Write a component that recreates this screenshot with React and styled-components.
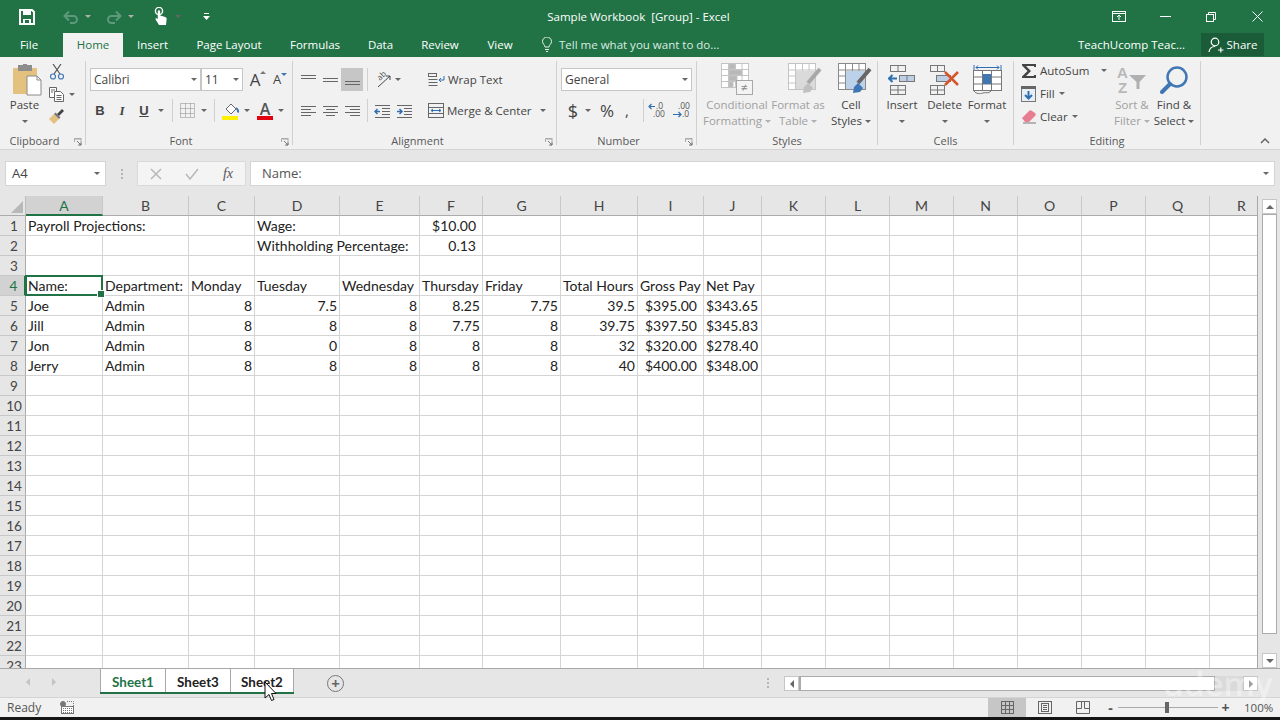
import React from 'react';
import styled, { createGlobalStyle } from 'styled-components';

const GlobalStyle = createGlobalStyle`
  html, body {
    margin: 0;
    padding: 0;
    width: 1280px;
    height: 720px;
    overflow: hidden;
    background: #fff;
  }
  * { box-sizing: border-box; }
`;

const uiFont = `"Open Sans", "Noto Sans", sans-serif`;
const cellFont = `Lato, "Liberation Sans", sans-serif`;
const green = '#217346';

const Page = styled.div`
  position: relative;
  width: 1280px;
  height: 720px;
  display: flex;
  flex-direction: column;
  overflow: hidden;
  font-family: ${uiFont};
  font-size: 11.5px;
  color: #444;
`;

/* title bar */
const TitleBar = styled.div`
  height: 33px;
  background: ${green};
  display: grid;
  grid-template-columns: 1fr auto 1fr;
  align-items: center;
  color: #fff;
`;
const Qat = styled.div`
  display: flex;
  align-items: center;
  padding-left: 19px;
`;
const QatSlot = styled.div`
  width: ${p => p.$w}px;
  margin-left: ${p => p.$ml || 0}px;
  display: flex;
  align-items: center;
  justify-content: center;
`;
const Title = styled.div`
  font-size: 11.5px;
  white-space: pre;
  padding-right: 3px;
`;
const WinControls = styled.div`
  display: flex;
  justify-content: flex-end;
  align-items: center;
`;
const WinBtn = styled.div`
  width: 46px;
  display: flex;
  justify-content: center;
`;

/* tab row */
const TabRow = styled.div`
  height: 24px;
  background: ${green};
  display: flex;
  align-items: stretch;
  color: #fff;
`;
const Tab = styled.div`
  width: ${p => p.$w}px;
  margin-left: ${p => p.$ml || 0}px;
  padding-bottom: 2px;
  display: flex;
  align-items: center;
  justify-content: center;
  white-space: nowrap;
  background: ${p => (p.$active ? '#f1f1f1' : 'transparent')};
  color: ${p => (p.$active ? green : '#fff')};
`;
const TellMe = styled.div`
  display: flex;
  align-items: center;
  gap: 7px;
  margin-left: 15px;
  padding-bottom: 2px;
  color: #dcebe3;
  white-space: nowrap;
`;
const Account = styled.div`
  margin-left: auto;
  padding-bottom: 1px;
  display: flex;
  align-items: center;
  white-space: nowrap;
`;
const ShareBtn = styled.div`
  width: 63px;
  height: 23px;
  margin: 0 16px 0 16px;
  background: #1a5c38;
  display: flex;
  align-items: center;
  justify-content: center;
  gap: 3px;
`;

/* ribbon */
const Ribbon = styled.div`
  height: 93px;
  background: #f1f1f1;
  border-bottom: 1px solid #d4d4d4;
  display: flex;
  padding-top: 4px;
  position: relative;
`;
const Group = styled.div`
  width: ${p => p.$w}px;
  height: 84px;
  border-right: 1px solid #d0d0d0;
  display: flex;
  flex-direction: column;
  position: relative;
`;
const GroupBody = styled.div`
  height: 72px;
  display: flex;
  align-items: flex-start;
  padding-left: ${p => p.$pl || 0}px;
`;
const GroupLabel = styled.div`
  height: 12px;
  line-height: 16px;
  text-align: center;
  font-size: 11px;
  color: #595959;
  padding-right: ${p => p.$pr || 0}px;
`;
const Launcher = styled.svg`
  position: absolute;
  right: 3px;
  bottom: -1px;
`;
const Collapse = styled.svg`
  position: absolute;
  right: 10px;
  bottom: 5px;
`;
const BigBtn = styled.div`
  width: ${p => p.$w}px;
  margin-left: ${p => p.$ml || 0}px;
  display: flex;
  flex-direction: column;
  align-items: center;
  color: ${p => (p.$dim ? '#a0a0a0' : '#444')};
  line-height: 16px;
  white-space: nowrap;
`;
const BigIcon = styled.div`
  height: 35px;
  margin-top: 1px;
  margin-left: ${p => p.$shift || 0}px;
  display: flex;
  align-items: center;
  justify-content: center;
`;
const CaretLine = styled.div`
  height: 16px;
  display: flex;
  align-items: center;
  gap: 3px;
`;
const Caret = styled.span`
  display: inline-block;
  width: 0;
  height: 0;
  flex: none;
  margin-left: ${p => p.$ml || 0}px;
  border-left: 3px solid transparent;
  border-right: 3px solid transparent;
  border-top: 3px solid ${p => (p.$dim ? '#b0b0b0' : '#666')};
`;
const Stack = styled.div`
  width: ${p => (p.$w ? `${p.$w}px` : 'auto')};
  display: flex;
  flex-direction: column;
  gap: ${p => (p.$gap === undefined ? 8 : p.$gap)}px;
  padding-top: ${p => (p.$pt === undefined ? 7 : p.$pt)}px;
  margin-top: ${p => p.$mt || 0}px;
`;
const Row = styled.div`
  height: ${p => p.$h || 23}px;
  display: flex;
  align-items: center;
`;
const Tool = styled.div`
  width: ${p => p.$w || 22}px;
  height: 23px;
  display: flex;
  align-items: center;
  justify-content: center;
  flex: none;
  background: ${p => (p.$on ? '#c6c6c6' : 'transparent')};
  color: #444;
`;
const Sep = styled.div`
  width: 1px;
  height: 23px;
  flex: none;
  background: #d0d0d0;
  margin: 0 ${p => p.$mr}px 0 ${p => p.$ml}px;
`;
const SelectBox = styled.div`
  width: ${p => p.$w}px;
  height: 23px;
  background: #fff;
  border: 1px solid #c6c6c6;
  display: flex;
  align-items: center;
  justify-content: space-between;
  padding: 0 3px 0 3px;
  font-size: 12px;
  color: #444;
  flex: none;
`;
const TextTool = styled.div`
  height: 23px;
  display: flex;
  align-items: center;
  gap: ${p => p.$gap || 3}px;
  color: #444;
  white-space: nowrap;
`;
const FaceB = styled.span`
  font-weight: 700;
  font-size: 13px;
  font-family: "Liberation Sans", sans-serif;
`;
const FaceI = styled.span`
  font-style: italic;
  font-weight: 700;
  font-size: 13px;
  font-family: "Liberation Serif", serif;
`;
const FaceU = styled.span`
  font-weight: 700;
  font-size: 13px;
  text-decoration: underline;
  font-family: "Liberation Sans", sans-serif;
`;
const Money = styled.span`
  font-size: ${p => p.$s || 16}px;
  line-height: 1;
`;
const GrowA = styled.span`
  font-size: ${p => p.$s}px;
  line-height: 1;
  position: relative;
  &::after {
    content: '';
    position: absolute;
    top: 0;
    right: -6px;
    border-left: 3px solid transparent;
    border-right: 3px solid transparent;
    ${p => (p.$up ? 'border-bottom: 3px solid #777;' : 'border-top: 3px solid #3f77b4;')}
  }
`;

/* formula bar */
const FormulaBar = styled.div`
  height: 46px;
  background: #e6e6e6;
  display: flex;
  align-items: flex-start;
  padding: 11px 5px 0 5px;
`;
const NameBox = styled.div`
  width: 101px;
  height: 25px;
  background: #fff;
  border: 1px solid #d4d4d4;
  display: flex;
  align-items: center;
  justify-content: space-between;
  padding: 0 5px 1px 6px;
  font-size: 13px;
`;
const Dots = styled.div`
  width: ${p => p.$w}px;
  height: 25px;
  display: flex;
  flex-direction: column;
  align-items: center;
  justify-content: center;
  gap: 2px;
  span {
    width: 2px;
    height: 2px;
    background: #b4b4b4;
  }
`;
const FxButtons = styled.div`
  width: 109px;
  height: 25px;
  background: #f4f4f4;
  border: 1px solid #d9d9d9;
  margin-right: 4px;
  display: flex;
  align-items: center;
  justify-content: space-between;
  padding: 0 12px;
`;
const FxMark = styled.span`
  font-family: "Liberation Serif", serif;
  font-style: italic;
  font-size: 14px;
  color: #555;
`;
const FormulaInput = styled.div`
  flex: 1;
  height: 25px;
  background: #fff;
  border: 1px solid #d4d4d4;
  display: flex;
  align-items: center;
  justify-content: space-between;
  padding: 0 5px 1px 11px;
  font-size: 13px;
  color: #555;
`;

/* sheet */
const Sheet = styled.div`
  height: 473px;
  display: flex;
  border-bottom: 1px solid #a8a8a8;
`;
const GridWrap = styled.div`
  width: 1258px;
  overflow: hidden;
  border-right: 1px solid #a8a8a8;
`;
const Cells = styled.div`
  width: 1274px;
  display: grid;
  grid-template-columns: 26px 77px 86px 66px 85px 80px 63px 78px 77px 66px 58px repeat(8, 64px);
  grid-auto-rows: 20px;
  font-family: ${cellFont};
  font-size: 14px;
  color: #222;
`;
const Corner = styled.div`
  background: #e6e6e6;
  border-right: 1px solid #bdbdbd;
  border-bottom: 1px solid #ababab;
  position: relative;
  &::after {
    content: '';
    position: absolute;
    right: 2px;
    bottom: 2px;
    border-left: 12px solid transparent;
    border-bottom: 12px solid #b8b8b8;
  }
`;
const ColHead = styled.div`
  background: ${p => (p.$active ? '#d2d2d2' : '#e6e6e6')};
  color: ${p => (p.$active ? green : '#444')};
  border-right: 1px solid #c8c8c8;
  border-bottom: ${p => (p.$active ? `2px solid ${green}` : '1px solid #ababab')};
  display: flex;
  align-items: center;
  justify-content: center;
`;
const RowHead = styled.div`
  background: ${p => (p.$active ? '#d2d2d2' : '#e6e6e6')};
  color: ${p => (p.$active ? green : '#444')};
  border-right: ${p => (p.$active ? `2px solid ${green}` : '1px solid #ababab')};
  border-bottom: 1px solid #c8c8c8;
  font-size: 13.5px;
  display: flex;
  align-items: center;
  justify-content: center;
  padding-left: 3px;
`;
const Cell = styled.div`
  grid-column: span ${p => p.$span || 1};
  border-right: 1px solid #d4d4d4;
  border-bottom: 1px solid #d4d4d4;
  padding: 0 ${p => (p.$acct ? 6 : 2)}px 0 2px;
  line-height: 20px;
  white-space: nowrap;
  text-align: ${p => (p.$right ? 'right' : 'left')};
  position: relative;
  ${p =>
    p.$selected &&
    `
    &::after {
      content: '';
      position: absolute;
      left: -1px;
      top: -1px;
      right: -1px;
      bottom: -1px;
      border: 2px solid ${green};
    }
    &::before {
      content: '';
      position: absolute;
      right: -3px;
      bottom: -3px;
      width: 6px;
      height: 6px;
      background: ${green};
      border: 1px solid #fff;
      z-index: 1;
    }
  `}
`;
const VScroll = styled.div`
  width: 22px;
  background: #e6e6e6;
  padding: 3px 3px 0 4px;
  display: flex;
  flex-direction: column;
`;
const ScrollBtn = styled.div`
  width: ${p => p.$w || 15}px;
  height: ${p => p.$h || 15}px;
  flex: none;
  background: #fff;
  border: 1px solid #c6c6c6;
  display: flex;
  align-items: center;
  justify-content: center;
`;
const VThumb = styled.div`
  width: 15px;
  height: 420px;
  flex: none;
  background: #fff;
  border: 1px solid #ababab;
  margin-bottom: 19px;
`;
const Tri = styled.span`
  width: 0;
  height: 0;
  display: block;
  ${p => p.$dir === 'up' && `border-left: 4px solid transparent; border-right: 4px solid transparent; border-bottom: 4px solid ${p.$c || '#666'};`}
  ${p => p.$dir === 'down' && `border-left: 4px solid transparent; border-right: 4px solid transparent; border-top: 4px solid ${p.$c || '#666'};`}
  ${p => p.$dir === 'left' && `border-top: 4px solid transparent; border-bottom: 4px solid transparent; border-right: 4px solid ${p.$c || '#666'};`}
  ${p => p.$dir === 'right' && `border-top: 4px solid transparent; border-bottom: 4px solid transparent; border-left: 4px solid ${p.$c || '#666'};`}
`;

/* sheet tabs */
const TabBar = styled.div`
  height: 28px;
  background: #e6e6e6;
  display: flex;
  align-items: flex-start;
`;
const TabNav = styled.div`
  width: 100px;
  height: 26px;
  display: flex;
  align-items: center;
  gap: 22px;
  padding-left: 26px;
`;
const SheetTabs = styled.div`
  display: flex;
  height: 25px;
  border-bottom: 2px solid ${green};
  background: #fff;
`;
const SheetTab = styled.div`
  width: ${p => p.$w}px;
  border-left: 1px solid #a8a8a8;
  border-right: ${p => (p.$last ? '1px solid #a8a8a8' : 'none')};
  padding-top: 2px;
  display: flex;
  align-items: center;
  justify-content: center;
  font-family: ${cellFont};
  font-weight: 700;
  font-size: 13.4px;
  color: ${p => (p.$active ? green : '#222')};
`;
const AddSheet = styled.div`
  width: 17px;
  height: 17px;
  margin: 6px 0 0 33px;
  border: 1.5px solid #777;
  border-radius: 50%;
  color: #666;
  display: flex;
  align-items: center;
  justify-content: center;
  font-size: 15px;
  font-weight: 700;
  line-height: 1;
`;
const HSplit = styled(Dots)`
  width: 8px;
  height: 14px;
  margin: 7px 12px 0 420px;
`;
const HScroll = styled.div`
  width: 474px;
  height: 15px;
  margin-top: 7px;
  display: flex;
  background: #dadada;
  & > :last-child {
    margin-left: auto;
  }
`;
const HThumb = styled.div`
  width: 416px;
  height: 15px;
  background: #fff;
  border: 1px solid #ababab;
  border-left: 2px solid #ababab;
`;

/* status bar */
const StatusBar = styled.div`
  height: 20px;
  background: #f1f1f1;
  border-top: 1px solid #d4d4d4;
  display: flex;
  align-items: center;
  padding-left: 7px;
  font-size: 12px;
  color: #555;
`;
const MacroWrap = styled.div`
  margin-left: 19px;
  display: flex;
`;
const StatusRight = styled.div`
  width: 292px;
  margin-left: auto;
  display: flex;
  align-items: center;
`;
const ViewBtn = styled.div`
  width: 38px;
  height: 19px;
  display: flex;
  align-items: center;
  justify-content: center;
  background: ${p => (p.$on ? '#c6c6c6' : 'transparent')};
`;
const Zoom = styled.div`
  display: flex;
  align-items: center;
  margin-left: 3px;
  color: #555;
`;
const ZoomTrack = styled.div`
  width: 100px;
  height: 1px;
  background: #aaa;
  margin: 0 2px;
  position: relative;
  &::after {
    content: '';
    position: absolute;
    left: 47px;
    top: -5px;
    width: 4px;
    height: 11px;
    background: #666;
  }
`;
const ZoomMark = styled.span`
  width: 11px;
  text-align: center;
  font-size: 14px;
  font-weight: 700;
  line-height: 1;
`;
const Percent = styled.div`
  margin-left: 13px;
  font-size: 11.5px;
`;
const BlackEdge = styled.div`
  height: 3px;
  background: #151515;
`;

/* overlays */
const Pointer = styled.svg`
  position: absolute;
  left: 264px;
  top: 681px;
`;
const Watermark = styled.div`
  position: absolute;
  left: 1163px;
  top: 661px;
  font-family: ${uiFont};
  font-size: 33px;
  font-weight: 600;
  color: rgba(255, 255, 255, 0.4);
  pointer-events: none;
`;

/* icons */
const SaveIcon = () => (
  <svg width="16" height="16" viewBox="0 0 16 16">
    <path d="M1 1h12l2 2v12H1z" fill="none" stroke="#fff" strokeWidth="2" />
    <rect x="4" y="2" width="8" height="4" fill="#fff" />
    <rect x="4" y="10" width="8" height="5" fill="#fff" />
    <rect x="6" y="11" width="4" height="3" fill="#217346" />
  </svg>
);
const UndoIcon = ({ flip }) => (
  <svg width="16" height="14" viewBox="0 0 16 14" transform={flip ? 'scale(-1 1)' : undefined}>
    <path d="M3 6h7.500a3.500 3.500 0 0 1 0 7H7" fill="none" stroke="#5c9a7a" strokeWidth="2" />
    <path d="M6 1.500L1.500 6 6 10.500" fill="none" stroke="#5c9a7a" strokeWidth="2" />
  </svg>
);
const TouchIcon = () => (
  <svg width="14" height="19" viewBox="0 0 14 19">
    <circle cx="5" cy="4" r="3.600" fill="none" stroke="#fff" strokeWidth="1.400" />
    <path d="M3.800 4.500a1.200 1.200 0 0 1 2.400 0v4l5 1.600c1.400.6 1.600 1.400 1.400 2.400L12 18H5L1.600 12.400c-.4-1 .5-1.600 1.400-1l.8.7z" fill="#fff" />
  </svg>
);
const CustomizeIcon = () => (
  <svg width="7" height="8" viewBox="0 0 7 8">
    <rect x="1" y="0" width="5" height="1" fill="#fff" />
    <path d="M0 3h7L3.500 7z" fill="#fff" />
  </svg>
);
const RibbonDisplayIcon = () => (
  <svg width="14" height="11" viewBox="0 0 14 11" fill="none" stroke="#fff">
    <rect x=".5" y=".5" width="13" height="10" />
    <path d="M.5 2.500h13M7 9V4.500M5 6l2-2 2 2" />
  </svg>
);
const MinIcon = () => (
  <svg width="11" height="1" viewBox="0 0 11 1"><rect width="11" height="1" fill="#fff" /></svg>
);
const RestoreIcon = () => (
  <svg width="10" height="10" viewBox="0 0 10 10" fill="none" stroke="#fff">
    <rect x=".5" y="2.500" width="7" height="7" />
    <path d="M2.500 2.500v-2h7v7h-2" />
  </svg>
);
const CloseIcon = () => (
  <svg width="11" height="11" viewBox="0 0 11 11" stroke="#fff" fill="none"><path d="M.5.500l10 10M10.500.500l-10 10" /></svg>
);
const BulbIcon = () => (
  <svg width="10" height="15" viewBox="0 0 10 15" fill="none" stroke="#e5f0ea">
    <path d="M3 10c0-2-2.500-3-2.500-5.500a4.500 4.500 0 0 1 9 0C9.500 7 7 8 7 10z" />
    <path d="M3 12.500h4M4 14.500h2" />
  </svg>
);
const PersonIcon = () => (
  <svg width="16" height="16" viewBox="0 0 16 16" fill="none" stroke="#fff" strokeWidth="1.200">
    <circle cx="7" cy="5" r="3.800" />
    <path d="M1 15c.5-3.500 2.500-5.500 6-5.500M10 13h5.500M12.800 10.500v5" />
  </svg>
);
const PasteIcon = () => (
  <svg width="30" height="32" viewBox="0 0 30 32">
    <rect x="1" y="4" width="24" height="26" rx="1" fill="#e3c17f" />
    <rect x="6" y="1" width="14" height="6" fill="#8d8d8d" />
    <rect x="11" y="0" width="4" height="3" fill="#8d8d8d" />
    <path d="M15 12h10l4 4v15H15z" fill="#fff" stroke="#8a8a8a" />
    <path d="M25 12v4h4" fill="none" stroke="#8a8a8a" />
  </svg>
);
const ScissorsIcon = () => (
  <svg width="16" height="16" viewBox="0 0 16 16" fill="none" strokeWidth="1.200">
    <path d="M4 0l7 10M12 0L5 10" stroke="#555" />
    <circle cx="4" cy="12.500" r="2.500" stroke="#3f77b4" />
    <circle cx="12" cy="12.500" r="2.500" stroke="#3f77b4" />
  </svg>
);
const CopyIcon = () => (
  <svg width="16" height="15" viewBox="0 0 16 15" fill="#fff" stroke="#666">
    <path d="M.5.500h7v10h-7z" />
    <path d="M5.500 4.500h6l3 3v7h-9z" />
    <path d="M2 3h4M2 5h2M7.500 8.500h5M7.500 10.500h5M7.500 12.500h5" fill="none" />
  </svg>
);
const BrushIcon = () => (
  <svg width="16" height="15" viewBox="0 0 16 15">
    <path d="M0 10l5-5 5 5-5 5z" fill="#e3c17f" />
    <path d="M5 5l1.500-1.500 5 5L10 10z" fill="#777" />
    <path d="M8 5l5-5 2 2-5 5z" fill="#444" />
  </svg>
);
const LauncherIcon = () => (
  <Launcher width="8" height="8" viewBox="0 0 8 8" fill="none" stroke="#777">
    <path d="M.5 4V.5h7M1 1h6v6H4" stroke="#aaa" />
    <path d="M3 3l4 4M7 4.500V7H4.500" />
  </Launcher>
);
const BordersIcon = () => (
  <svg width="15" height="15" viewBox="0 0 15 15" fill="none" stroke="#888" strokeDasharray="1 1">
    <rect x=".5" y=".5" width="14" height="14" />
    <path d="M.5 5.500h14M.5 10.500h14M5.500 .5v14M10.500 .5v14" />
  </svg>
);
const FillIcon = () => (
  <svg width="18" height="18" viewBox="0 0 18 18">
    <path d="M4 7l5-5 5 5-5 5z" fill="#fff" stroke="#666" />
    <path d="M14 6c1.500 1 2.500 2.500 2 4.500" fill="none" stroke="#3f77b4" strokeWidth="2" />
    <rect x="0" y="14" width="16" height="4" fill="#ffef00" />
  </svg>
);
const FontColorIcon = () => (
  <svg width="16" height="18" viewBox="0 0 16 18" overflow="visible">
    <text x="8" y="13" textAnchor="middle" fontSize="16" fontWeight="600" fontFamily="Open Sans" fill="#555">A</text>
    <rect x="0" y="14" width="16" height="4" fill="#e3000f" />
  </svg>
);
const AlignIcon = ({ lines, y = 0 }) => (
  <svg width="15" height="14" viewBox="0 0 15 14" stroke="#666" fill="none">
    {lines.map(([x1, x2], i) => (
      <path key={i} d={`M${x1} ${y + 2.5 + i * 3}H${x2}`} />
    ))}
  </svg>
);
const OrientIcon = () => (
  <svg width="18" height="16" viewBox="0 0 18 16" fill="none" stroke="#444" overflow="visible">
    <text x="6" y="9" fontSize="8" fontFamily="Open Sans" fill="#555" stroke="none" transform="rotate(-45 6 9)">ab</text>
    <path d="M4 15L16 4M12 4h4v4" />
  </svg>
);
const IndentIcon = ({ dir }) => (
  <svg width="17" height="14" viewBox="0 0 17 14" fill="none" stroke="#666">
    <path d="M1 1.500h15M8 4.500h8M8 7.500h8M8 10.500h8M1 13.500h15" />
    {dir === 'left' ? (
      <path d="M1 7.500h5M3.500 5L1 7.500 3.500 10" stroke="#2f6fb0" strokeWidth="1.500" />
    ) : (
      <path d="M1 7.500h5M3.500 5L6 7.500 3.500 10" stroke="#2f6fb0" strokeWidth="1.500" />
    )}
  </svg>
);
const WrapIcon = () => (
  <svg width="17" height="14" viewBox="0 0 17 14" fill="none" stroke="#666">
    <rect x=".5" y=".5" width="8" height="3" />
    <path d="M.5 6.500h9M.5 9.500h9M.5 12.500h9" />
    <path d="M16 3v4h-5M13 5l-2 2 2 2" stroke="#2f6fb0" />
  </svg>
);
const MergeIcon = () => (
  <svg width="16" height="15" viewBox="0 0 16 15" fill="none" stroke="#666">
    <rect x=".5" y=".5" width="15" height="14" />
    <path d="M.5 4.500h15M.5 10.500h15" />
    <path d="M3 7.500h10M5 6l-2 1.500L5 9M11 6l2 1.500L11 9" stroke="#2f6fb0" />
  </svg>
);
const DecimalIcon = ({ more }) => (
  <svg width="20" height="17" viewBox="0 0 20 17" fontFamily="Open Sans" fontSize="8.5" fill="#555" overflow="visible">
    {more ? (
      <>
        <text x="8" y="7">.0</text>
        <text x="5" y="15">.00</text>
        <path d="M1 4.500h6M3.500 2L1 4.500 3.500 7" fill="none" stroke="#2f6fb0" strokeWidth="1.200" />
      </>
    ) : (
      <>
        <text x="6" y="7">.00</text>
        <text x="10" y="15">.0</text>
        <path d="M1 12.500h8M6.500 10L9 12.500 6.500 15" fill="none" stroke="#2f6fb0" strokeWidth="1.200" />
      </>
    )}
  </svg>
);
const CondIcon = () => (
  <svg width="32" height="34" viewBox="0 0 32 34" fill="none" stroke="#c4c4c4" overflow="visible">
    <rect x=".5" y=".5" width="27" height="24" fill="#fff" />
    <path d="M7.500 .5v24M14.500 .5v24M21 .5v24M.5 6.500h27M.5 12.500h27M.5 18.500h27" />
    <rect x="8" y="1" width="6" height="5" fill="#b8b8b8" />
    <rect x="8" y="7" width="13" height="5" fill="#b8b8b8" />
    <rect x="8" y="13" width="8" height="5" fill="#b8b8b8" />
    <rect x="8" y="19" width="4" height="5" fill="#b8b8b8" />
    <rect x="15.500" y="17.500" width="16" height="14" fill="#f4f4f4" stroke="#a8a8a8" />
    <text x="23.500" y="29" textAnchor="middle" fontSize="12" fill="#888" stroke="none" fontFamily="Open Sans">≠</text>
  </svg>
);
const TableBrushIcon = ({ styles }) => (
  <svg width="34" height="34" viewBox="0 0 34 34" fill="none" stroke={styles ? '#8a8a8a' : '#c4c4c4'}>
    <rect x=".5" y=".5" width="27" height="26" fill="#fff" />
    <path d="M7.500 .5v26M14.500 .5v26M21 .5v26M.5 7h27M.5 13h27M.5 20h27" />
    <rect x="8" y="8" width="19" height="18" fill={styles ? '#bcd2ea' : '#dadada'} stroke="none" />
    <path d="M32 6L20 20" stroke={styles ? '#666' : '#a8a8a8'} strokeWidth="4" />
    <path d="M20 20l-4 4-1 6 7-1 3-4z" fill={styles ? '#3f77b4' : '#c0c0c0'} stroke="none" />
  </svg>
);
const InsertIcon = () => (
  <svg width="28" height="30" viewBox="0 0 28 30" fill="none" stroke="#777">
    <rect x="2.500" y=".5" width="15" height="6" />
    <path d="M10 .5v6" />
    <path d="M9 13.500H1M4.500 10L1 13.500 4.500 17" stroke="#2f6fb0" strokeWidth="2" />
    <rect x="11.500" y="10.500" width="15" height="6" fill="#bccfe6" />
    <path d="M19 10.500v6" />
    <rect x="2.500" y="20.500" width="15" height="9" />
    <path d="M10 20.500v9M2.500 25h15" />
  </svg>
);
const DeleteIcon = () => (
  <svg width="30" height="30" viewBox="0 0 30 30" fill="none" stroke="#777">
    <rect x=".5" y=".5" width="14" height="6" />
    <path d="M7.500 .5v6" />
    <rect x="6.500" y="10.500" width="14" height="6" fill="#bccfe6" />
    <rect x=".5" y="20.500" width="14" height="9" />
    <path d="M7.500 20.500v9M.5 25h14" />
    <path d="M15 7l13 13M28 7L15 20" stroke="#d4552b" strokeWidth="2.500" />
  </svg>
);
const FormatIcon = () => (
  <svg width="29" height="32" viewBox="0 0 29 32" fill="none" stroke="#777">
    <path d="M1 1v5M28 1v5M3 3.500h23M3 3.500l2-2M3 3.500l2 2M26 3.500l-2-2M26 3.500l-2 2" stroke="#2f6fb0" />
    <rect x=".5" y="6.500" width="28" height="20" fill="#fff" />
    <path d="M9.500 6.500v20M18.500 6.500v20M.5 13h28M.5 20h28" />
    <rect x="10" y="10" width="8" height="10" fill="#3f77b4" stroke="none" />
    <path d="M1 27c2 3 6 3 9 2s5 1 8-2" />
  </svg>
);
const SigmaIcon = () => (
  <svg width="16" height="16" viewBox="0 0 16 16">
    <path d="M1 1h14v3h-2V3H5l5 5-5 5h8v-1h2v3H1v-1.500L6.500 8 1 2.500z" fill="#444" />
  </svg>
);
const FillDownIcon = () => (
  <svg width="15" height="16" viewBox="0 0 15 16">
    <rect x=".5" y=".5" width="14" height="15" fill="#e8eef6" stroke="#777" />
    <rect x="0" y="0" width="15" height="3" fill="#666" />
    <path d="M7.500 5v7M4 9l3.500 3.500L11 9" fill="none" stroke="#2f6fb0" strokeWidth="2" />
  </svg>
);
const EraserIcon = () => (
  <svg width="15" height="15" viewBox="0 0 15 15">
    <path d="M1 9l7-7c1-1 2-1 3 0l3 2c1 1 1 2 0 3l-6 6H4z" fill="#e77d90" />
    <path d="M2 14h13" stroke="#777" />
  </svg>
);
const SortIcon = () => (
  <svg width="30" height="28" viewBox="0 0 30 28" fontFamily="Liberation Sans" fontWeight="700" fontSize="15" fill="#b8b8b8" overflow="visible">
    <text x="0" y="12">A</text>
    <text x="1" y="27">Z</text>
    <path d="M12 9h17l-6.500 7v7h-3v-7z" fill="#b0b0b0" />
  </svg>
);
const FindIcon = () => (
  <svg width="28" height="28" viewBox="0 0 28 28" fill="none" stroke="#3f77b4">
    <circle cx="17" cy="11" r="9.500" strokeWidth="2.500" />
    <path d="M10 18L2 26" strokeWidth="4" strokeLinecap="round" />
  </svg>
);
const MacroIcon = () => (
  <svg width="14" height="13" viewBox="0 0 14 13" fill="none" stroke="#777">
    <circle cx="3" cy="3" r="2.500" fill="#777" />
    <rect x="1.500" y="5.500" width="12" height="7" fill="#fff" />
    <path d="M7 .5h6.500v5M3 7.500h9M3 9.500h9M3 11.500h9" strokeDasharray="1 1" />
  </svg>
);
const NormalView = () => (
  <svg width="13" height="13" viewBox="0 0 13 13" fill="none" stroke="#666">
    <rect x=".5" y=".5" width="12" height="12" />
    <path d="M4.500 .5v12M8.500 .5v12M.5 4.500h12M.5 8.500h12" />
  </svg>
);
const PageView = () => (
  <svg width="14" height="13" viewBox="0 0 14 13" fill="none" stroke="#666">
    <rect x=".5" y=".5" width="13" height="12" />
    <rect x="3.500" y="2.500" width="7" height="8" />
    <path d="M5 4.500h4M5 6.500h4M5 8.500h4" />
  </svg>
);
const BreakView = () => (
  <svg width="14" height="13" viewBox="0 0 14 13" fill="none" stroke="#666">
    <path d="M.5 12.500V.5h13v12zM.5 7.500h5v-7M8.500 .5v7h5" />
  </svg>
);

const columns = ['A', 'B', 'C', 'D', 'E', 'F', 'G', 'H', 'I', 'J', 'K', 'L', 'M', 'N', 'O', 'P', 'Q', 'R'];

const hours = [
  ['Joe', 'Admin', '8', '7.5', '8', '8.25', '7.75', '39.5', '$395.00', '$343.65'],
  ['Jill', 'Admin', '8', '8', '8', '7.75', '8', '39.75', '$397.50', '$345.83'],
  ['Jon', 'Admin', '8', '0', '8', '8', '8', '32', '$320.00', '$278.40'],
  ['Jerry', 'Admin', '8', '8', '8', '8', '8', '40', '$400.00', '$348.00'],
];
const headings = ['Name:', 'Department:', 'Monday', 'Tuesday', 'Wednesday', 'Thursday', 'Friday', 'Total Hours', 'Gross Pay', 'Net Pay'];

const blanks = (n, key) => Array.from({ length: n }, (_, i) => <Cell key={`${key}-${i}`} />);

const renderRow = num => {
  const cells = [];
  if (num === 1) {
    cells.push(<Cell key="a" $span={2}>Payroll Projections:</Cell>, <Cell key="c" />, <Cell key="d">Wage:</Cell>, <Cell key="e" />, <Cell key="f" $right $acct>$10.00</Cell>, ...blanks(12, num));
  } else if (num === 2) {
    cells.push(...blanks(3, 'l'), <Cell key="d" $span={2}>Withholding Percentage:</Cell>, <Cell key="f" $right $acct>0.13</Cell>, ...blanks(12, num));
  } else if (num === 4) {
    headings.forEach((h, i) => cells.push(<Cell key={h} $selected={i === 0}>{h}</Cell>));
    cells.push(...blanks(8, num));
  } else if (num >= 5 && num <= 8) {
    hours[num - 5].forEach((v, i) => cells.push(<Cell key={i} $right={i > 1} $acct={i > 7}>{v}</Cell>));
    cells.push(...blanks(8, num));
  } else {
    cells.push(...blanks(18, num));
  }
  return (
    <React.Fragment key={num}>
      <RowHead $active={num === 4}>{num}</RowHead>
      {cells}
    </React.Fragment>
  );
};

export default function App() {
  return (
    <Page>
      <GlobalStyle />
      <TitleBar>
        <Qat>
          <QatSlot $w={16}><SaveIcon /></QatSlot>
          <QatSlot $w={16} $ml={28}><UndoIcon /></QatSlot>
          <QatSlot $w={10} $ml={4}><Caret $dim /></QatSlot>
          <QatSlot $w={16} $ml={13}><UndoIcon flip /></QatSlot>
          <QatSlot $w={10} $ml={4}><Caret $dim /></QatSlot>
          <QatSlot $w={14} $ml={18}><TouchIcon /></QatSlot>
          <QatSlot $w={10} $ml={5}><Caret /></QatSlot>
          <QatSlot $w={7} $ml={20}><CustomizeIcon /></QatSlot>
        </Qat>
        <Title>Sample Workbook  [Group] - Excel</Title>
        <WinControls>
          <WinBtn><RibbonDisplayIcon /></WinBtn>
          <WinBtn><MinIcon /></WinBtn>
          <WinBtn><RestoreIcon /></WinBtn>
          <WinBtn><CloseIcon /></WinBtn>
        </WinControls>
      </TitleBar>

      <TabRow>
        <Tab $w={58}>File</Tab>
        <Tab $w={60} $ml={5} $active>Home</Tab>
        <Tab $w={59}>Insert</Tab>
        <Tab $w={94}>Page Layout</Tab>
        <Tab $w={78}>Formulas</Tab>
        <Tab $w={53}>Data</Tab>
        <Tab $w={66}>Review</Tab>
        <Tab $w={54}>View</Tab>
        <TellMe><BulbIcon />Tell me what you want to do...</TellMe>
        <Account>
          TeachUcomp Teac...
          <ShareBtn><PersonIcon />Share</ShareBtn>
        </Account>
      </TabRow>

      <Ribbon>
        <Group $w={86}>
          <GroupBody>
            <BigBtn $w={49}>
              <BigIcon $shift={4}><PasteIcon /></BigIcon>
              <span>Paste</span>
              <CaretLine><Caret /></CaretLine>
            </BigBtn>
            <Stack $gap={0} $pt={0}>
              <Row $h={22}><Tool $w={16}><ScissorsIcon /></Tool></Row>
              <Row $h={22}><Tool $w={16}><CopyIcon /></Tool><Tool $w={14}><Caret /></Tool></Row>
              <Row $h={22}><Tool $w={16}><BrushIcon /></Tool></Row>
            </Stack>
          </GroupBody>
          <GroupLabel $pr={16}>Clipboard</GroupLabel>
          <LauncherIcon />
        </Group>

        <Group $w={207}>
          <GroupBody $pl={4}>
            <Stack>
              <Row>
                <SelectBox $w={111}>Calibri<Caret /></SelectBox>
                <SelectBox $w={42}>11<Caret /></SelectBox>
                <Tool $w={24}><GrowA $s={17} $up>A</GrowA></Tool>
                <Tool $w={20}><GrowA $s={13}>A</GrowA></Tool>
              </Row>
              <Row>
                <Tool $w={20}><FaceB>B</FaceB></Tool>
                <Tool $w={24}><FaceI>I</FaceI></Tool>
                <Tool $w={20}><FaceU>U</FaceU></Tool>
                <Tool $w={14}><Caret /></Tool>
                <Sep $ml={4} $mr={3} />
                <Tool><BordersIcon /></Tool>
                <Tool $w={12}><Caret /></Tool>
                <Sep $ml={4} $mr={5} />
                <Tool><FillIcon /></Tool>
                <Tool $w={10}><Caret /></Tool>
                <Tool $w={26}><FontColorIcon /></Tool>
                <Tool $w={6}><Caret /></Tool>
              </Row>
            </Stack>
          </GroupBody>
          <GroupLabel $pr={16}>Font</GroupLabel>
          <LauncherIcon />
        </Group>

        <Group $w={264}>
          <GroupBody $pl={4}>
            <Stack $w={131}>
              <Row>
                <Tool><AlignIcon lines={[[0, 15], [0, 15]]} /></Tool>
                <Tool><AlignIcon lines={[[0, 15], [0, 15]]} y={3} /></Tool>
                <Tool $on><AlignIcon lines={[[0, 15], [0, 15]]} y={6} /></Tool>
                <Sep $ml={4} $mr={3} />
                <Tool $w={24}><OrientIcon /></Tool>
                <Tool $w={6}><Caret /></Tool>
              </Row>
              <Row>
                <Tool><AlignIcon lines={[[0, 15], [0, 10], [0, 15], [0, 10]]} /></Tool>
                <Tool><AlignIcon lines={[[0, 15], [3, 12], [0, 15], [3, 12]]} /></Tool>
                <Tool><AlignIcon lines={[[0, 15], [5, 15], [0, 15], [5, 15]]} /></Tool>
                <Sep $ml={4} $mr={3} />
                <Tool><IndentIcon dir="left" /></Tool>
                <Tool><IndentIcon dir="right" /></Tool>
              </Row>
            </Stack>
            <Stack>
              <Row><TextTool><WrapIcon />Wrap Text</TextTool></Row>
              <Row><TextTool><MergeIcon />Merge &amp; Center<Caret $ml={5} /></TextTool></Row>
            </Stack>
          </GroupBody>
          <GroupLabel $pr={14}>Alignment</GroupLabel>
          <LauncherIcon />
        </Group>

        <Group $w={140}>
          <GroupBody $pl={4}>
            <Stack>
              <Row><SelectBox $w={131}>General<Caret /></SelectBox></Row>
              <Row>
                <Tool $w={24}><Money $s={18}>$</Money></Tool>
                <Tool $w={6}><Caret /></Tool>
                <Tool $w={32}><Money $s={17}>%</Money></Tool>
                <Tool $w={8}><Money $s={15}>,</Money></Tool>
                <Sep $ml={12} $mr={3} />
                <Tool $w={22}><DecimalIcon more /></Tool>
                <Tool $w={26}><DecimalIcon /></Tool>
              </Row>
            </Stack>
          </GroupBody>
          <GroupLabel $pr={16}>Number</GroupLabel>
          <LauncherIcon />
        </Group>

        <Group $w={181}>
          <GroupBody $pl={7}>
            <BigBtn $w={66} $dim>
              <BigIcon><CondIcon /></BigIcon>
              <span>Conditional</span>
              <CaretLine>Formatting<Caret $dim /></CaretLine>
            </BigBtn>
            <BigBtn $w={52} $ml={2} $dim>
              <BigIcon $shift={14}><TableBrushIcon /></BigIcon>
              <span>Format as</span>
              <CaretLine>Table<Caret $dim /></CaretLine>
            </BigBtn>
            <BigBtn $w={44} $ml={5}>
              <BigIcon $shift={8}><TableBrushIcon styles /></BigIcon>
              <span>Cell</span>
              <CaretLine>Styles<Caret /></CaretLine>
            </BigBtn>
          </GroupBody>
          <GroupLabel>Styles</GroupLabel>
        </Group>

        <Group $w={136}>
          <GroupBody $pl={5}>
            <BigBtn $w={38}>
              <BigIcon><InsertIcon /></BigIcon>
              <span>Insert</span>
              <CaretLine><Caret /></CaretLine>
            </BigBtn>
            <BigBtn $w={45} $ml={1}>
              <BigIcon><DeleteIcon /></BigIcon>
              <span>Delete</span>
              <CaretLine><Caret /></CaretLine>
            </BigBtn>
            <BigBtn $w={40}>
              <BigIcon><FormatIcon /></BigIcon>
              <span>Format</span>
              <CaretLine><Caret /></CaretLine>
            </BigBtn>
          </GroupBody>
          <GroupLabel>Cells</GroupLabel>
        </Group>

        <Group $w={187}>
          <GroupBody $pl={7}>
            <Stack $w={92} $gap={0} $pt={0} $mt={-2}>
              <Row><TextTool><SigmaIcon />AutoSum<Caret $ml={9} /></TextTool></Row>
              <Row><TextTool $gap={4}><FillDownIcon />Fill<Caret /></TextTool></Row>
              <Row><TextTool $gap={4}><EraserIcon />Clear<Caret /></TextTool></Row>
            </Stack>
            <BigBtn $w={38} $dim>
              <BigIcon><SortIcon /></BigIcon>
              <span>Sort &amp;</span>
              <CaretLine>Filter<Caret $dim /></CaretLine>
            </BigBtn>
            <BigBtn $w={46}>
              <BigIcon><FindIcon /></BigIcon>
              <span>Find &amp;</span>
              <CaretLine>Select<Caret /></CaretLine>
            </BigBtn>
          </GroupBody>
          <GroupLabel>Editing</GroupLabel>
        </Group>

        <Collapse width="10" height="6" viewBox="0 0 10 6" fill="none" stroke="#666" strokeWidth="1.500">
          <path d="M1 5l4-4 4 4" />
        </Collapse>
      </Ribbon>

      <FormulaBar>
        <NameBox>A4<Caret /></NameBox>
        <Dots $w={31}><span /><span /><span /></Dots>
        <FxButtons>
          <svg width="12" height="12" viewBox="0 0 12 12" stroke="#b8b8b8" strokeWidth="1.500"><path d="M1 1l10 10M11 1L1 11" /></svg>
          <svg width="14" height="12" viewBox="0 0 14 12" fill="none" stroke="#b8b8b8" strokeWidth="1.500"><path d="M1 6l4 5 8-10" /></svg>
          <FxMark>fx</FxMark>
        </FxButtons>
        <FormulaInput>Name:<Caret /></FormulaInput>
      </FormulaBar>

      <Sheet>
        <GridWrap>
          <Cells>
            <Corner />
            {columns.map(c => <ColHead key={c} $active={c === 'A'}>{c}</ColHead>)}
            {Array.from({ length: 23 }, (_, i) => renderRow(i + 1))}
          </Cells>
        </GridWrap>
        <VScroll>
          <ScrollBtn><Tri $dir="up" /></ScrollBtn>
          <VThumb />
          <ScrollBtn><Tri $dir="down" /></ScrollBtn>
        </VScroll>
      </Sheet>

      <TabBar>
        <TabNav><Tri $dir="left" $c="#c4c4c4" /><Tri $dir="right" $c="#c4c4c4" /></TabNav>
        <SheetTabs>
          <SheetTab $w={65} $active>Sheet1</SheetTab>
          <SheetTab $w={65}>Sheet3</SheetTab>
          <SheetTab $w={64} $last>Sheet2</SheetTab>
        </SheetTabs>
        <AddSheet>+</AddSheet>
        <HSplit><span /><span /><span /></HSplit>
        <HScroll>
          <ScrollBtn><Tri $dir="left" /></ScrollBtn>
          <HThumb />
          <ScrollBtn><Tri $dir="right" /></ScrollBtn>
        </HScroll>
      </TabBar>

      <StatusBar>
        Ready
        <MacroWrap><MacroIcon /></MacroWrap>
        <StatusRight>
          <ViewBtn $on><NormalView /></ViewBtn>
          <ViewBtn><PageView /></ViewBtn>
          <ViewBtn><BreakView /></ViewBtn>
          <Zoom>
            <ZoomMark>-</ZoomMark>
            <ZoomTrack />
            <ZoomMark>+</ZoomMark>
          </Zoom>
          <Percent>100%</Percent>
        </StatusRight>
      </StatusBar>
      <BlackEdge />

      <Pointer width="13" height="21" viewBox="0 0 13 21">
        <path d="M1 1v16l4-3.500 2.500 6 2.500-1-2.500-6H12z" fill="#fff" stroke="#111" />
      </Pointer>
      <Watermark>udemy</Watermark>
    </Page>
  );
}
